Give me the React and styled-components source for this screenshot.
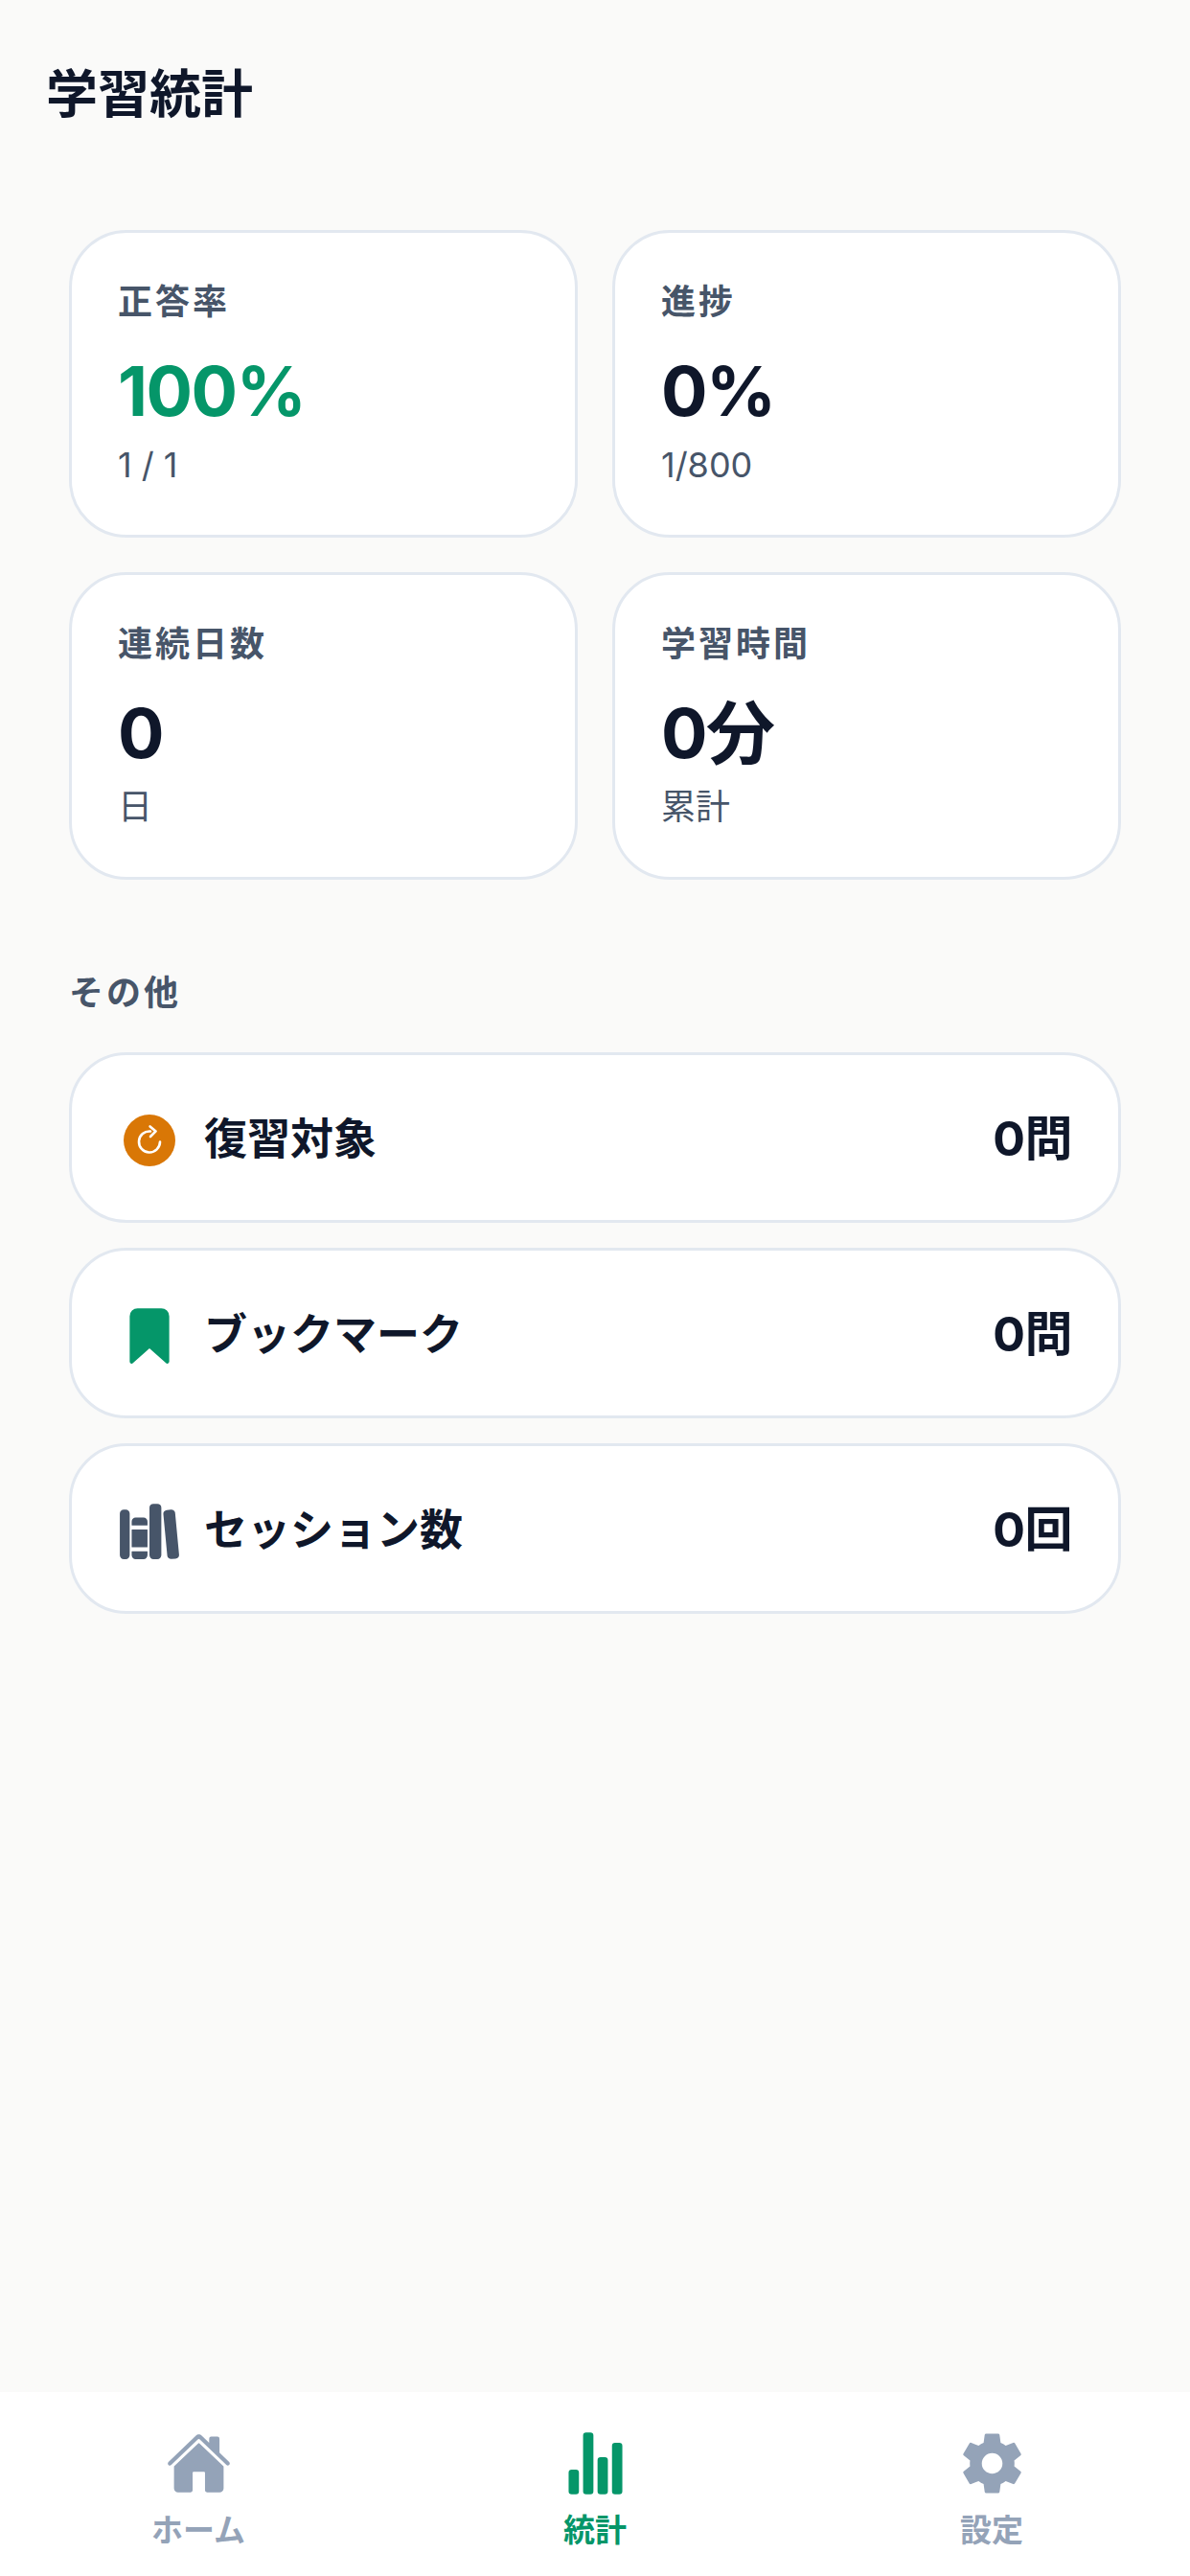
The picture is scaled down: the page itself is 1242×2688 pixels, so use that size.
import React from 'react'
import styled, { createGlobalStyle } from 'styled-components'
import {
  IoBookmark,
  IoHome,
  IoLibrary,
  IoSettingsSharp,
  IoStatsChart,
} from 'react-icons/io5'

const GlobalStyle = createGlobalStyle`
  html, body {
    margin: 0;
    padding: 0;
    background: #fafaf9;
  }
  body {
    font-family: Inter, "Noto Sans CJK JP", sans-serif;
  }
`

function ReviewIcon() {
  return (
    <svg width="66" height="66" viewBox="0 0 66 66">
      <circle cx="33" cy="33" r="27" fill="#d97706" />
      <path
        d="M34 23.5A11 11 0 1 0 44 34.5"
        fill="none"
        stroke="#fff"
        strokeWidth="2.6"
        strokeLinecap="round"
      />
      <path
        d="M33.6 18.4L39.6 23.4L34 29"
        fill="none"
        stroke="#fff"
        strokeWidth="2.6"
        strokeLinecap="round"
        strokeLinejoin="round"
      />
    </svg>
  )
}

const stats = [
  { label: '正答率', value: '100%', sub: '1 / 1', accent: true },
  { label: '進捗', value: '0%', sub: '1/800' },
  { label: '連続日数', value: '0', sub: '日' },
  { label: '学習時間', value: '0分', sub: '累計' },
]

const others = [
  { label: '復習対象', value: '0問', icon: <ReviewIcon /> },
  { label: 'ブックマーク', value: '0問', icon: <IoBookmark size={66} color="#059669" /> },
  { label: 'セッション数', value: '0回', icon: <IoLibrary size={66} color="#475569" /> },
]

const tabs = [
  { label: 'ホーム', icon: <IoHome size={69} /> },
  { label: '統計', icon: <IoStatsChart size={69} />, active: true },
  { label: '設定', icon: <IoSettingsSharp size={69} /> },
]

export default function App() {
  return (
    <Page>
      <GlobalStyle />
      <Header>学習統計</Header>
      <Content>
        <StatGrid>
          {stats.map((s) => (
            <StatCard key={s.label}>
              <StatLabel>{s.label}</StatLabel>
              <StatValue $accent={s.accent}>{s.value}</StatValue>
              <StatSub>{s.sub}</StatSub>
            </StatCard>
          ))}
        </StatGrid>
        <SectionTitle>その他</SectionTitle>
        <RowList>
          {others.map((o) => (
            <Row key={o.label}>
              <RowIcon>{o.icon}</RowIcon>
              <RowLabel>{o.label}</RowLabel>
              <RowValue>{o.value}</RowValue>
            </Row>
          ))}
        </RowList>
      </Content>
      <TabBar>
        {tabs.map((t) => (
          <Tab key={t.label} $active={t.active}>
            {t.icon}
            <TabLabel>{t.label}</TabLabel>
          </Tab>
        ))}
      </TabBar>
    </Page>
  )
}

const Page = styled.div`
  width: 1242px;
  height: 2688px;
  display: flex;
  flex-direction: column;
  background: #fafaf9;
  overflow: hidden;
`

const Header = styled.h1`
  margin: 0;
  padding: 60px 48px 0;
  height: 180px;
  box-sizing: border-box;
  font-size: 54px;
  line-height: 78px;
  font-weight: 700;
  color: #0f172a;
`

const Content = styled.main`
  flex: 1;
  padding: 60px 72px 0;
`

const StatGrid = styled.div`
  display: grid;
  grid-template-columns: 1fr 1fr;
  gap: 36px;
`

const StatCard = styled.div`
  box-sizing: border-box;
  height: 321px;
  padding: 48px;
  background: #fff;
  border: 3px solid #e2e8f0;
  border-radius: 60px;
`

const StatLabel = styled.div`
  font-size: 36px;
  line-height: 48px;
  font-weight: 600;
  letter-spacing: 3px;
  color: #475569;
`

const StatValue = styled.div`
  margin-top: 27px;
  font-size: 72px;
  line-height: 84px;
  font-weight: 750;
  letter-spacing: -1.5px;
  color: ${(p) => (p.$accent ? '#059669' : '#0f172a')};
`

const StatSub = styled.div`
  margin-top: 11px;
  font-size: 36px;
  line-height: 48px;
  color: #475569;
`

const SectionTitle = styled.h2`
  margin: 94px 0 38px;
  font-size: 36px;
  line-height: 48px;
  font-weight: 600;
  letter-spacing: 3px;
  color: #475569;
`

const RowList = styled.div`
  display: flex;
  flex-direction: column;
  gap: 26px;
`

const Row = styled.div`
  box-sizing: border-box;
  height: 178px;
  padding: 0 48px;
  display: flex;
  align-items: center;
  background: #fff;
  border: 3px solid #e2e8f0;
  border-radius: 60px;
`

const RowIcon = styled.div`
  width: 66px;
  height: 66px;
  margin: 6px 24px 0 0;
  display: flex;
`

const RowLabel = styled.div`
  flex: 1;
  padding-bottom: 4px;
  font-size: 45px;
  font-weight: 700;
  color: #0f172a;
`

const RowValue = styled.div`
  padding-bottom: 6px;
  font-size: 50px;
  font-weight: 750;
  letter-spacing: -0.5px;
  color: #0f172a;
`

const TabBar = styled.nav`
  height: 192px;
  display: grid;
  grid-template-columns: repeat(3, 1fr);
  background: #fff;
`

const Tab = styled.div`
  padding-top: 40px;
  display: flex;
  flex-direction: column;
  align-items: center;
  color: ${(p) => (p.$active ? '#059669' : '#94a3b8')};
`

const TabLabel = styled.span`
  margin-top: 15px;
  font-size: 33px;
  line-height: 40px;
  font-weight: 600;
`
